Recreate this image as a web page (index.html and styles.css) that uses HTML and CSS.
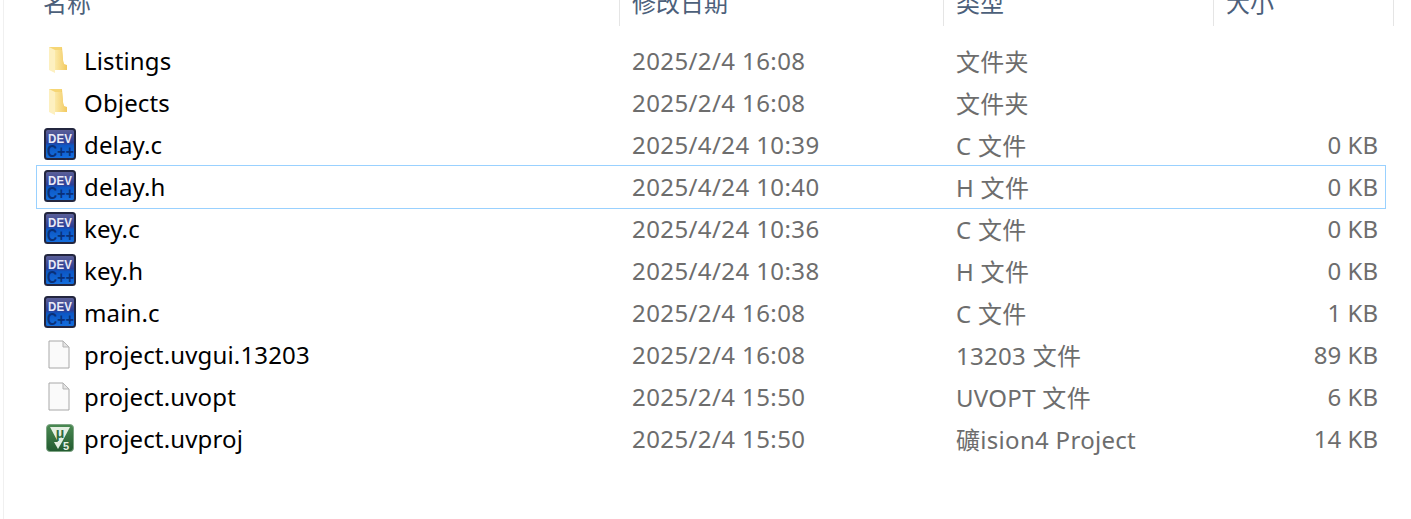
FILE: index.html
```html
<!DOCTYPE html>
<html lang="zh-CN">
<head>
  <meta charset="UTF-8">
  <title>文件列表</title>
  <link rel="stylesheet" href="styles.css">
</head>
<body>
  <svg class="defs" width="0" height="0">
    <defs>
      <linearGradient id="folderFront" x1="0" y1="0" x2="1" y2="0">
        <stop offset="0" stop-color="#fbe9a8"/>
        <stop offset="1" stop-color="#f2c95f"/>
      </linearGradient>
      <linearGradient id="devBg" x1="0" y1="0" x2="0" y2="1">
        <stop offset="0" stop-color="#5e6299"/>
        <stop offset="0.45" stop-color="#2d3f96"/>
        <stop offset="0.55" stop-color="#0d57c4"/>
        <stop offset="1" stop-color="#1570e0"/>
      </linearGradient>
      <linearGradient id="uvBg" x1="0" y1="0" x2="0" y2="1">
        <stop offset="0" stop-color="#4a8a52"/>
        <stop offset="1" stop-color="#225a30"/>
      </linearGradient>
      <symbol id="folder" viewBox="0 0 20 28">
        <path d="M1 1h13v21H1z" fill="#f6d675"/>
        <path d="M14 1l1 13 1 4 3 1v5H7z" fill="#f3cd67"/>
        <path d="M1 1l6 3v23l-6-3z" fill="#fdf0c0"/>
        <path d="M7 4h7l1 12 1 3h3v5H7z" fill="url(#folderFront)"/>
      </symbol>
      <symbol id="dev" viewBox="0 0 32 32">
        <rect x="1" y="1" width="30" height="30" rx="2.5" fill="url(#devBg)" stroke="#23263f" stroke-width="2"/>
        <text x="4" y="15" class="dev-top" textLength="24" lengthAdjust="spacingAndGlyphs">DEV</text>
        <text x="3" y="29" class="dev-bottom" textLength="27" lengthAdjust="spacingAndGlyphs">C++</text>
      </symbol>
      <symbol id="doc" viewBox="0 0 22 29">
        <path d="M1 1h14l6 6v21H1z" fill="#fafafa" stroke="#a8a8a8"/>
        <path d="M15 1v6h6z" fill="#e4e4e4" stroke="#b5b5b5"/>
      </symbol>
      <symbol id="uv" viewBox="0 0 28 28">
        <rect x="0.5" y="0.5" width="27" height="27" rx="3.5" fill="url(#uvBg)" stroke="#7fa585"/>
        <path d="M4 3h20l-8 15h-4z" fill="#e4efe2"/>
        <path d="M8 18h8l-4 7z" fill="#e4efe2"/>
        <text x="14" y="14" class="uv-mu" text-anchor="middle">μ</text>
        <text x="17" y="26" class="uv-five">5</text>
      </symbol>
    </defs>
  </svg>

  <main class="explorer">
    <div class="columns header">
      <div class="head-cell">名称</div>
      <div class="head-cell bordered">修改日期</div>
      <div class="head-cell bordered">类型</div>
      <div class="head-cell bordered last">大小</div>
    </div>

    <div class="list">
      <div class="columns row"><div class="name"><svg class="icon folder"><use href="#folder"/></svg>Listings</div><div class="date">2025/2/4 16:08</div><div class="type">文件夹</div><div class="size"></div></div>
      <div class="columns row"><div class="name"><svg class="icon folder"><use href="#folder"/></svg>Objects</div><div class="date">2025/2/4 16:08</div><div class="type">文件夹</div><div class="size"></div></div>
      <div class="columns row"><div class="name"><svg class="icon dev"><use href="#dev"/></svg>delay.c</div><div class="date">2025/4/24 10:39</div><div class="type">C 文件</div><div class="size">0 KB</div></div>
      <div class="columns row selected"><div class="name"><svg class="icon dev"><use href="#dev"/></svg>delay.h</div><div class="date">2025/4/24 10:40</div><div class="type">H 文件</div><div class="size">0 KB</div></div>
      <div class="columns row"><div class="name"><svg class="icon dev"><use href="#dev"/></svg>key.c</div><div class="date">2025/4/24 10:36</div><div class="type">C 文件</div><div class="size">0 KB</div></div>
      <div class="columns row"><div class="name"><svg class="icon dev"><use href="#dev"/></svg>key.h</div><div class="date">2025/4/24 10:38</div><div class="type">H 文件</div><div class="size">0 KB</div></div>
      <div class="columns row"><div class="name"><svg class="icon dev"><use href="#dev"/></svg>main.c</div><div class="date">2025/2/4 16:08</div><div class="type">C 文件</div><div class="size">1 KB</div></div>
      <div class="columns row"><div class="name"><svg class="icon doc"><use href="#doc"/></svg>project.uvgui.13203</div><div class="date">2025/2/4 16:08</div><div class="type">13203 文件</div><div class="size">89 KB</div></div>
      <div class="columns row"><div class="name"><svg class="icon doc"><use href="#doc"/></svg>project.uvopt</div><div class="date">2025/2/4 15:50</div><div class="type">UVOPT 文件</div><div class="size">6 KB</div></div>
      <div class="columns row"><div class="name"><svg class="icon uv"><use href="#uv"/></svg>project.uvproj</div><div class="date">2025/2/4 15:50</div><div class="type">礦ision4 Project</div><div class="size">14 KB</div></div>
    </div>
  </main>
</body>
</html>
```

FILE: styles.css
```css
html, body {
  margin: 0;
  height: 519px;
  overflow: hidden;
  background: #fff;
}
body {
  font-family: "Noto Sans", "Noto Sans CJK SC", sans-serif;
  font-size: 24px;
}
.defs {
  display: block;
  height: 0;
}
.explorer {
  height: 519px;
  margin-left: 3px;
  padding-left: 32px;
  border-left: 1px solid #f0f0f0;
}
.columns {
  display: grid;
  grid-template-columns: 583px 324px 270px 1fr;
}
.header {
  width: 1358px;
  height: 26px;
  margin-bottom: 14px;
  color: #4c607a;
}
.head-cell {
  box-sizing: border-box;
  display: flex;
  align-items: flex-end;
  height: 26px;
  padding-left: 7px;
  padding-bottom: 7px;
  line-height: 32px;
}
.bordered {
  padding-left: 12px;
  border-left: 1px solid #e5e5e5;
}
.last {
  border-right: 1px solid #e5e5e5;
}
.list {
  width: 1350px;
}
.row {
  box-sizing: border-box;
  height: 42px;
  padding-bottom: 2px;
  align-items: center;
  border: 1px solid transparent;
  color: #6d6d6d;
}
.row.selected {
  height: 44px;
  margin: -1px 0;
  border-color: #99d1ff;
}
.name {
  display: flex;
  align-items: center;
  color: #000;
  letter-spacing: 0.15px;
}
.icon {
  flex-shrink: 0;
}
.folder {
  width: 20px;
  height: 28px;
  margin: 0 16px 0 11px;
}
.dev {
  width: 32px;
  height: 32px;
  margin: 0 8px 0 7px;
}
.doc {
  width: 22px;
  height: 29px;
  margin: 0 14px 0 11px;
}
.uv {
  width: 28px;
  height: 28px;
  margin: 0 10px 0 9px;
}
.date {
  padding-left: 12px;
  letter-spacing: 0.4px;
}
.type {
  padding-left: 12px;
  letter-spacing: 0.3px;
}
.size {
  text-align: right;
  padding-right: 7px;
}
.dev-top {
  font-family: "Liberation Sans", sans-serif;
  font-size: 13px;
  font-weight: 700;
  fill: #e8eaf8;
}
.dev-bottom {
  font-family: "Liberation Sans", sans-serif;
  font-size: 16px;
  font-weight: 700;
  fill: #0a3078;
}
.uv-mu {
  font-family: "Liberation Sans", sans-serif;
  font-size: 14px;
  font-weight: 700;
  fill: #2f6b3c;
}
.uv-five {
  font-family: "Liberation Sans", sans-serif;
  font-size: 11px;
  font-weight: 700;
  fill: #e6f0e4;
}
```
